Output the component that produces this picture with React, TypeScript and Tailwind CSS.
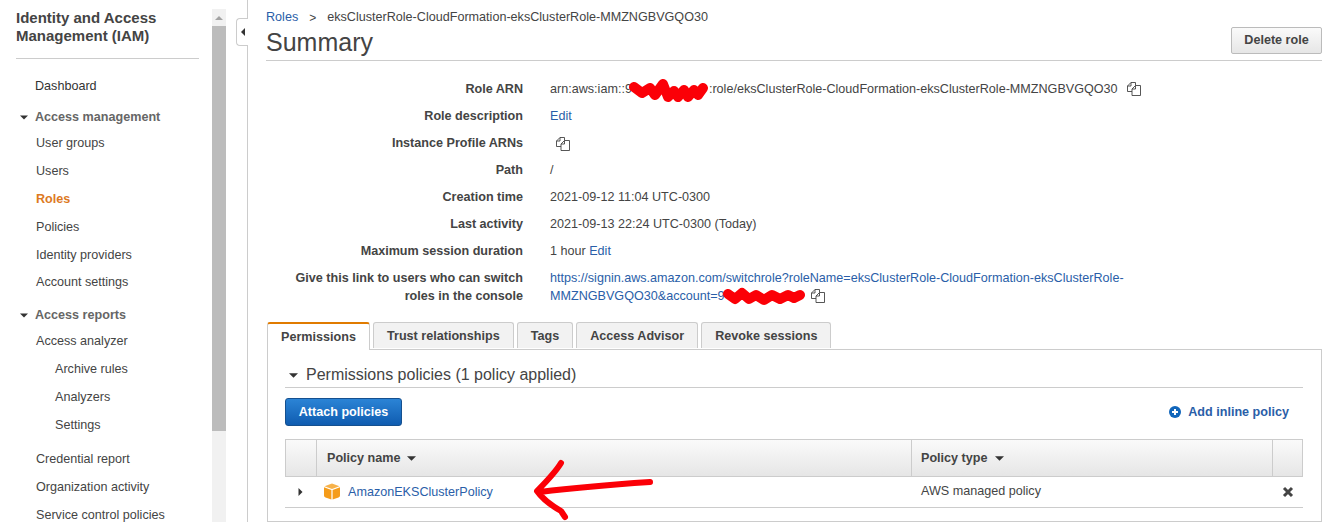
const sans = { fontFamily: '"Liberation Sans", Arial, sans-serif' };

const Caret = ({ dir = 'down', className = '' }: { dir?: 'down' | 'right' | 'left'; className?: string }) => {
  const points = { down: '0,0 10,0 5,5', right: '0,0 5,5 0,10', left: '5,0 0,5 5,10' }[dir];
  const box = dir === 'down' ? '0 0 10 5' : '0 0 5 10';
  return (
    <svg viewBox={box} className={className} fill="currentColor">
      <polygon points={points} />
    </svg>
  );
};

const CopyIcon = ({ className = '' }: { className?: string }) => (
  <svg viewBox="0 0 14 14" className={className} fill="none" stroke="#444" strokeWidth="0.9">
    <path d="M8.5 3.5V0.5H4L0.5 4V9.5H5" />
    <path d="M4 0.5V4H0.5" />
    <path d="M5 7L8.5 3.5H13.5V13.5H5Z" fill="#fff" />
    <path d="M8.5 3.5V7H5" />
  </svg>
);

const Scribble = ({ d, className }: { d: string; className: string }) => (
  <svg className={className} fill="none" stroke="#fb0007" strokeLinecap="round" strokeLinejoin="round">
    <path d={d} strokeWidth="10" />
  </svg>
);

const NavLink = ({ label, active, indent }: { label: string; active?: boolean; indent?: boolean }) => (
  <div
    className={`flex h-[27.8px] items-center text-[12.6px] ${indent ? 'pl-[39px]' : 'pl-5'} ${
      active ? 'font-bold text-[#dd7a1f]' : 'text-[#444]'
    }`}
  >
    {label}
  </div>
);

const NavHeading = ({ label, className = '' }: { label: string; className?: string }) => (
  <div className={`flex h-[25px] items-center text-[12.6px] font-bold text-[#666] ${className}`}>
    <Caret className="ml-1 mr-[7px] h-[5px] w-2 text-[#333]" />
    {label}
  </div>
);

const Sidebar = () => (
  <aside className="w-[212px] shrink-0 pl-4 pr-[13px]">
    <div className="border-b border-[#ccc] pt-[9px] pb-[13px] text-[15px] leading-[18px] font-bold text-[#444]">
      Identity and Access
      <br />
      Management (IAM)
    </div>
    <div className="mt-[13px] flex h-7 items-center pl-[19px] text-[12.6px] text-[#333]">Dashboard</div>
    <NavHeading label="Access management" className="mt-[5px]" />
    <NavLink label="User groups" />
    <NavLink label="Users" />
    <NavLink label="Roles" active />
    <NavLink label="Policies" />
    <NavLink label="Identity providers" />
    <NavLink label="Account settings" />
    <NavHeading label="Access reports" className="mt-[6px]" />
    <NavLink label="Access analyzer" />
    <NavLink label="Archive rules" indent />
    <NavLink label="Analyzers" indent />
    <NavLink label="Settings" indent />
    <div className="mt-[7px]">
      <NavLink label="Credential report" />
      <NavLink label="Organization activity" />
      <NavLink label="Service control policies" />
    </div>
  </aside>
);

const Scrollbar = () => (
  <div className="mt-[9px] flex h-[513px] w-[14px] shrink-0 flex-col bg-[#f1f1f1]">
    <div className="flex h-[17px] items-center justify-center">
      <Caret className="h-1 w-2 rotate-180 text-[#a3a3a3]" />
    </div>
    <div className="h-[405px] bg-[#bcbcbc]" />
  </div>
);

const Link = ({ children }: { children: React.ReactNode }) => <span className="text-[#2a5ea8]">{children}</span>;

const DetailRow = ({ label, children }: { label: React.ReactNode; children: React.ReactNode }) => (
  <div className="grid grid-cols-[257px_1fr] gap-x-[27px] leading-[18px]">
    <div className="py-[4.5px] text-right font-bold text-[#444]">{label}</div>
    <div className="py-[4.5px] text-[#444]">{children}</div>
  </div>
);

const tabs = ['Trust relationships', 'Tags', 'Access Advisor', 'Revoke sessions'];

const Details = () => (
  <div className="mt-[14px] text-[12.6px]">
    <DetailRow label="Role ARN">
      <span className="flex items-center">
        arn:aws:iam::9
        <span className="relative inline-block h-[18px] w-[77px]">
          <Scribble
            className="absolute -top-[3px] -left-[4px] h-[28px] w-[80px]"
            d="M6 10L14 16L22 11L27 18L35 7L40 20L46 14L50 20L56 13L60 20L66 13L70 18L75 11"
          />
        </span>
        :role/eksClusterRole-CloudFormation-eksClusterRole-MMZNGBVGQO30
        <CopyIcon className="ml-[9px] h-[14px] w-[14px]" />
      </span>
    </DetailRow>
    <DetailRow label="Role description">
      <Link>Edit</Link>
    </DetailRow>
    <DetailRow label="Instance Profile ARNs">
      <CopyIcon className="mt-[3px] ml-[6px] h-[14px] w-[14px]" />
    </DetailRow>
    <DetailRow label="Path">/</DetailRow>
    <DetailRow label="Creation time">2021-09-12 11:04 UTC-0300</DetailRow>
    <DetailRow label="Last activity">2021-09-13 22:24 UTC-0300 (Today)</DetailRow>
    <DetailRow label="Maximum session duration">
      1 hour <Link>Edit</Link>
    </DetailRow>
    <DetailRow
      label={
        <>
          Give this link to users who can switch
          <br />
          roles in the console
        </>
      }
    >
      <Link>
        https://signin.aws.amazon.com/switchrole?roleName=eksClusterRole-CloudFormation-eksClusterRole-
        <br />
        <span className="inline-flex items-center">
          MMZNGBVGQO30&amp;account=9
          <span className="relative inline-block h-[18px] w-[80px]">
            <Scribble
              className="absolute -top-[1px] -left-[3px] h-[22px] w-[84px]"
              d="M6 8L13 13L20 7L27 13L34 9L42 14L50 9L58 13L66 9L72 12L78 9"
            />
          </span>
          <CopyIcon className="ml-[6px] h-[14px] w-[14px]" />
        </span>
      </Link>
    </DetailRow>
  </div>
);

const Tabs = () => (
  <div className="mt-[13px] ml-px flex h-[27px] gap-[3px] text-[12.6px]">
    <div className="z-10 flex h-[28px] w-[103px] items-center justify-center rounded-t-[3px] border border-b-0 border-t-2 border-[#ccc] border-t-[#e07b00] bg-white font-bold text-[#444]">
      Permissions
    </div>
    {tabs.map((tab) => (
      <div
        key={tab}
        className="flex h-[26px] items-center rounded-t-[3px] border border-b-0 border-[#ccc] bg-[#f2f2f2] px-[13px] pt-[2px] font-bold text-[#444]"
      >
        {tab}
      </div>
    ))}
  </div>
);

const CubeIcon = () => (
  <svg viewBox="0 0 16 17" className="h-[17px] w-4">
    <path d="M8 0.5L15.5 3.2L8 6L0.5 3.2Z" fill="#f7b24a" />
    <path d="M0 4.2L7.4 7V16.5L1.5 14.5Q0 14 0 12.5Z" fill="#f59c1a" />
    <path d="M16 4.2L8.6 7V16.5L14.5 14.5Q16 14 16 12.5Z" fill="#f59c1a" />
  </svg>
);

const PermissionsPanel = () => (
  <div className="ml-px flex-1 border border-[#ccc] pr-[18px] pl-[17px]">
    <div className="flex h-[38px] items-center border-b border-[#ccc] pt-[13px] text-[16px] text-[#444]">
      <Caret className="mr-[8px] ml-1 h-[5px] w-[9px] text-[#333]" />
      Permissions policies (1 policy applied)
    </div>
    <div className="mt-[10px] flex items-center justify-between">
      <button className="h-[28px] w-[117px] rounded-[3px] border border-[#15508f] bg-linear-to-b from-[#2b84d6] to-[#0f5cb0] text-[12.6px] font-bold text-white">
        Attach policies
      </button>
      <div className="mr-[14px] flex items-center text-[12.6px] font-bold text-[#2a5ea8]">
        <svg viewBox="0 0 12 12" className="mr-[7px] h-3 w-3">
          <circle cx="6" cy="6" r="6" fill="#1166bb" />
          <path d="M6 3V9M3 6H9" stroke="#fff" strokeWidth="2" />
        </svg>
        Add inline policy
      </div>
    </div>
    <div className="mt-[13px] text-[12.6px]">
      <div className="grid h-[38px] grid-cols-[30px_595px_361px_1fr] border border-[#ccc] bg-linear-to-b from-[#fafafa] to-[#e6e6e6] font-bold text-[#444]">
        <div />
        <div className="flex items-center border-l border-[#ccc] pl-[10px]">
          Policy name
          <Caret className="ml-[6px] h-[5px] w-[9px] text-[#333]" />
        </div>
        <div className="flex items-center border-l border-[#ccc] pl-[9px]">
          Policy type
          <Caret className="ml-[7px] h-[5px] w-[9px] text-[#333]" />
        </div>
        <div className="border-l border-[#ccc]" />
      </div>
      <div className="grid h-[31px] grid-cols-[31px_595px_361px_1fr] items-center border-b border-[#ccc]">
        <div className="flex justify-center">
          <Caret dir="right" className="h-2 w-[5px] text-[#333]" />
        </div>
        <div className="flex items-center pl-[8px]">
          <CubeIcon />
          <span className="ml-[8px] text-[#2a5ea8]">AmazonEKSClusterPolicy</span>
        </div>
        <div className="pb-px pl-[10px] text-[#444]">AWS managed policy</div>
        <div className="flex justify-center">
          <svg viewBox="0 0 12 12" className="h-3 w-3">
            <path d="M2 2L10 10M10 2L2 10" stroke="#444" strokeWidth="3" />
          </svg>
        </div>
      </div>
    </div>
  </div>
);

const Main = () => (
  <main className="relative ml-[21px] flex h-[522px] min-w-0 flex-1 flex-col border-l border-[#ccc] pr-px pl-[18px]">
    {/* collapse tab on the divider */}
    <div className="absolute top-[18px] -left-[12px] flex h-[28px] w-[12px] items-center justify-center rounded-l-[4px] border border-r-0 border-[#ccc] bg-white">
      <Caret dir="left" className="h-2 w-1 text-[#333]" />
    </div>
    <div className="border-b border-[#ccc] pb-[3px]">
      <div className="mt-[9px] flex h-[17px] items-center text-[12.6px] text-[#444]">
        <Link>Roles</Link>
        <span className="mx-[11px] text-[12px]">&gt;</span>
        eksClusterRole-CloudFormation-eksClusterRole-MMZNGBVGQO30
      </div>
      <div className="flex items-start justify-between">
        <div className="pt-px text-[25px] leading-[30px] text-[#444]">Summary</div>
        <button className="mt-[1px] h-[27px] w-[91px] rounded-[2px] border border-[#bbb] bg-linear-to-b from-[#fafafa] to-[#e6e6e6] text-[12.6px] font-bold text-[#444]">
          Delete role
        </button>
      </div>
    </div>
    <Details />
    <Tabs />
    <PermissionsPanel />
  </main>
);

export default function App() {
  return (
    <div className="relative flex h-[522px] w-[1323px] overflow-hidden bg-white" style={sans}>
      <Sidebar />
      <Scrollbar />
      <Main />
      {/* hand-drawn arrow annotation */}
      <svg className="pointer-events-none absolute top-[455px] left-[530px] h-[67px] w-[130px]" viewBox="0 0 130 67" fill="none">
        <path
          d="M120 27C90 29 50 32 10 37M31 8C25 18 15 28 7 36C14 46 24 52 31 56L35 62"
          stroke="#fb0007"
          strokeWidth="6"
          strokeLinecap="round"
          strokeLinejoin="round"
        />
      </svg>
    </div>
  );
}
